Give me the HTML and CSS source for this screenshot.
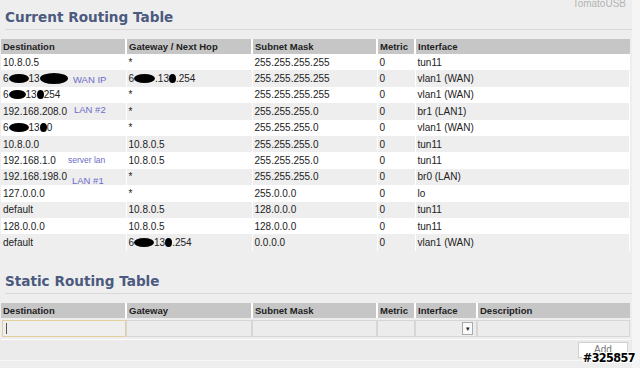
FILE: index.html
```html
<!DOCTYPE html>
<html lang="en">
<head>
    <meta charset="UTF-8">
    <title>Routing</title>
    <link rel="stylesheet" href="styles.css">
</head>
<body>
    <div class="panel">
        <div class="brand">TomatoUSB</div>
        <h2 class="title">Current Routing Table</h2>
        <table class="grid routes">
            <tr><th class="c1">Destination</th><th class="c2">Gateway / Next Hop</th><th class="c3">Subnet Mask</th><th class="c4">Metric</th><th>Interface</th></tr>
            <tr><td>10.8.0.5</td><td>*</td><td>255.255.255.255</td><td>0</td><td>tun11</td></tr>
            <tr><td class="note-cell">6<span class="blot w20"></span>13<span class="blot w28 tall"></span><span class="note n-wan">WAN IP</span></td><td>6<span class="blot w21"></span>.13<span class="blot w7"></span>.254</td><td>255.255.255.255</td><td>0</td><td>vlan1 (WAN)</td></tr>
            <tr><td>6<span class="blot w17"></span>13<span class="blot w7"></span>254</td><td>*</td><td>255.255.255.255</td><td>0</td><td>vlan1 (WAN)</td></tr>
            <tr><td class="note-cell">192.168.208.0<span class="note n-lan2">LAN #2</span></td><td>*</td><td>255.255.255.0</td><td>0</td><td>br1 (LAN1)</td></tr>
            <tr><td>6<span class="blot w20"></span>13<span class="blot w7"></span>0</td><td>*</td><td>255.255.255.0</td><td>0</td><td>vlan1 (WAN)</td></tr>
            <tr><td>10.8.0.0</td><td>10.8.0.5</td><td>255.255.255.0</td><td>0</td><td>tun11</td></tr>
            <tr><td class="note-cell">192.168.1.0<span class="note n-srv">server lan</span></td><td>10.8.0.5</td><td>255.255.255.0</td><td>0</td><td>tun11</td></tr>
            <tr><td class="note-cell">192.168.198.0<span class="note n-lan1">LAN #1</span></td><td>*</td><td>255.255.255.0</td><td>0</td><td>br0 (LAN)</td></tr>
            <tr><td>127.0.0.0</td><td>*</td><td>255.0.0.0</td><td>0</td><td>lo</td></tr>
            <tr><td>default</td><td>10.8.0.5</td><td>128.0.0.0</td><td>0</td><td>tun11</td></tr>
            <tr><td>128.0.0.0</td><td>10.8.0.5</td><td>128.0.0.0</td><td>0</td><td>tun11</td></tr>
            <tr><td>default</td><td>6<span class="blot w20"></span>13<span class="blot w7"></span>.254</td><td>0.0.0.0</td><td>0</td><td>vlan1 (WAN)</td></tr>
        </table>

        <h2 class="title second">Static Routing Table</h2>
        <table class="grid static">
            <tr><th class="c1">Destination</th><th class="c2">Gateway</th><th class="c3">Subnet Mask</th><th class="c4">Metric</th><th class="c5">Interface</th><th>Description</th></tr>
            <tr class="edit">
                <td><div class="field focus"><span class="caret"></span></div></td>
                <td><div class="field"></div></td>
                <td><div class="field"></div></td>
                <td><div class="field"></div></td>
                <td><div class="field select"><span class="arrow">&#9662;</span></div></td>
                <td><div class="field"></div></td>
            </tr>
        </table>
        <div class="actions">
            <button class="add">Add</button>
            <span class="tag">#325857</span>
        </div>
    </div>
</body>
</html>
```

FILE: styles.css
```css
body {
    margin: 0;
    padding: 0;
    background: #f5f5f5;
    font-family: "Liberation Sans", Arial, sans-serif;
    color: #222;
    overflow: hidden;
}
.panel {
    width: 632px;
    height: 368px;
    background: #eeeeee;
    position: relative;
}
.brand {
    position: absolute;
    right: 6px;
    top: -2px;
    font-size: 10px;
    color: #b4b4b4;
}
.title {
    margin: 0 0 9px 5px;
    height: 30px;
    box-sizing: border-box;
    padding-top: 9px;
    border-bottom: 1px solid #d8d8d8;
    font-family: "DejaVu Sans", sans-serif;
    font-weight: bold;
    font-size: 13.6px;
    line-height: 17px;
    color: #4b5a7e;
}
.title.second {
    margin-top: 13px;
}
.grid {
    margin-left: 1px;
    width: 629px;
    border-collapse: collapse;
    table-layout: fixed;
}
.grid th {
    background: #c6c6c6;
    font-size: 9.5px;
    font-weight: bold;
    text-align: left;
    height: 15px;
    padding: 0 0 0 2px;
    border-right: 2px solid #fff;
}
.grid th:last-child {
    border-right: none;
}
.c1, .c2 { width: 122px; }
.c3 { width: 121px; }
.c4 { width: 34px; }
.c5 { width: 58px; }
.routes td {
    font-size: 10px;
    height: 16.4px;
    padding: 0 0 0 2px;
    border-right: 1px solid #fff;
    white-space: nowrap;
}
.routes tr:nth-child(even) td {
    background: #fff;
}
.routes tr:nth-child(odd) td {
    background: #eeeeee;
}
.blot {
    display: inline-block;
    height: 9px;
    background: #000;
    border-radius: 50%;
    vertical-align: -1px;
}
.blot.tall {
    height: 11px;
    vertical-align: -2px;
}
.w7 { width: 7px; }
.w17 { width: 17px; }
.w20 { width: 20px; }
.w21 { width: 21px; }
.w28 { width: 28px; }
.note-cell {
    position: relative;
}
.note {
    position: absolute;
    color: #6c6cc8;
    font-size: 9.5px;
}
.n-wan { left: 72px; top: 4px; }
.n-lan2 { left: 73px; top: 1px; }
.n-srv { left: 67px; top: 3px; font-size: 8.5px; }
.n-lan1 { left: 71px; top: 6px; }
.static td {
    padding: 2px 0 1px 0;
    height: 18px;
}
.edit td {
    border-bottom: 1px solid #fbfbfb;
}
.field {
    height: 17px;
    box-sizing: border-box;
    border: 1px solid #d6d6d6;
    background: #ececec;
    position: relative;
}
.field.focus {
    margin-left: 1px;
    border-color: #e3cf9c;
    background: #efefef;
}
.caret {
    position: absolute;
    left: 3px;
    top: 2px;
    width: 1px;
    height: 11px;
    background: #555;
}
.select {
    display: flex;
    justify-content: flex-end;
    align-items: center;
    padding-right: 3px;
}
.arrow {
    width: 9px;
    height: 11px;
    border: 1px solid #aaa;
    background: #fafafa;
    font-size: 7px;
    line-height: 11px;
    text-align: center;
    color: #222;
}
.actions {
    height: 20px;
    background: #ebebeb;
    border-bottom: 1px solid #f7f7f7;
    display: flex;
    justify-content: flex-end;
    align-items: center;
    padding-right: 4px;
    position: relative;
}
.add {
    width: 50px;
    height: 16px;
    background: #fff;
    border: 1px solid #d0d0d0;
    font-family: "Liberation Sans", Arial, sans-serif;
    font-size: 10px;
    color: #777;
    padding: 0;
}
.tag {
    position: absolute;
    right: -3px;
    bottom: -5px;
    font-family: "DejaVu Sans Condensed", "DejaVu Sans", sans-serif;
    font-weight: bold;
    font-size: 12.5px;
    letter-spacing: -0.6px;
    color: #000;
    text-shadow: 1px 0 #fff, -1px 0 #fff, 0 1px #fff, 0 -1px #fff, 1px 1px #fff, -1px -1px #fff, 1px -1px #fff, -1px 1px #fff;
}
```
